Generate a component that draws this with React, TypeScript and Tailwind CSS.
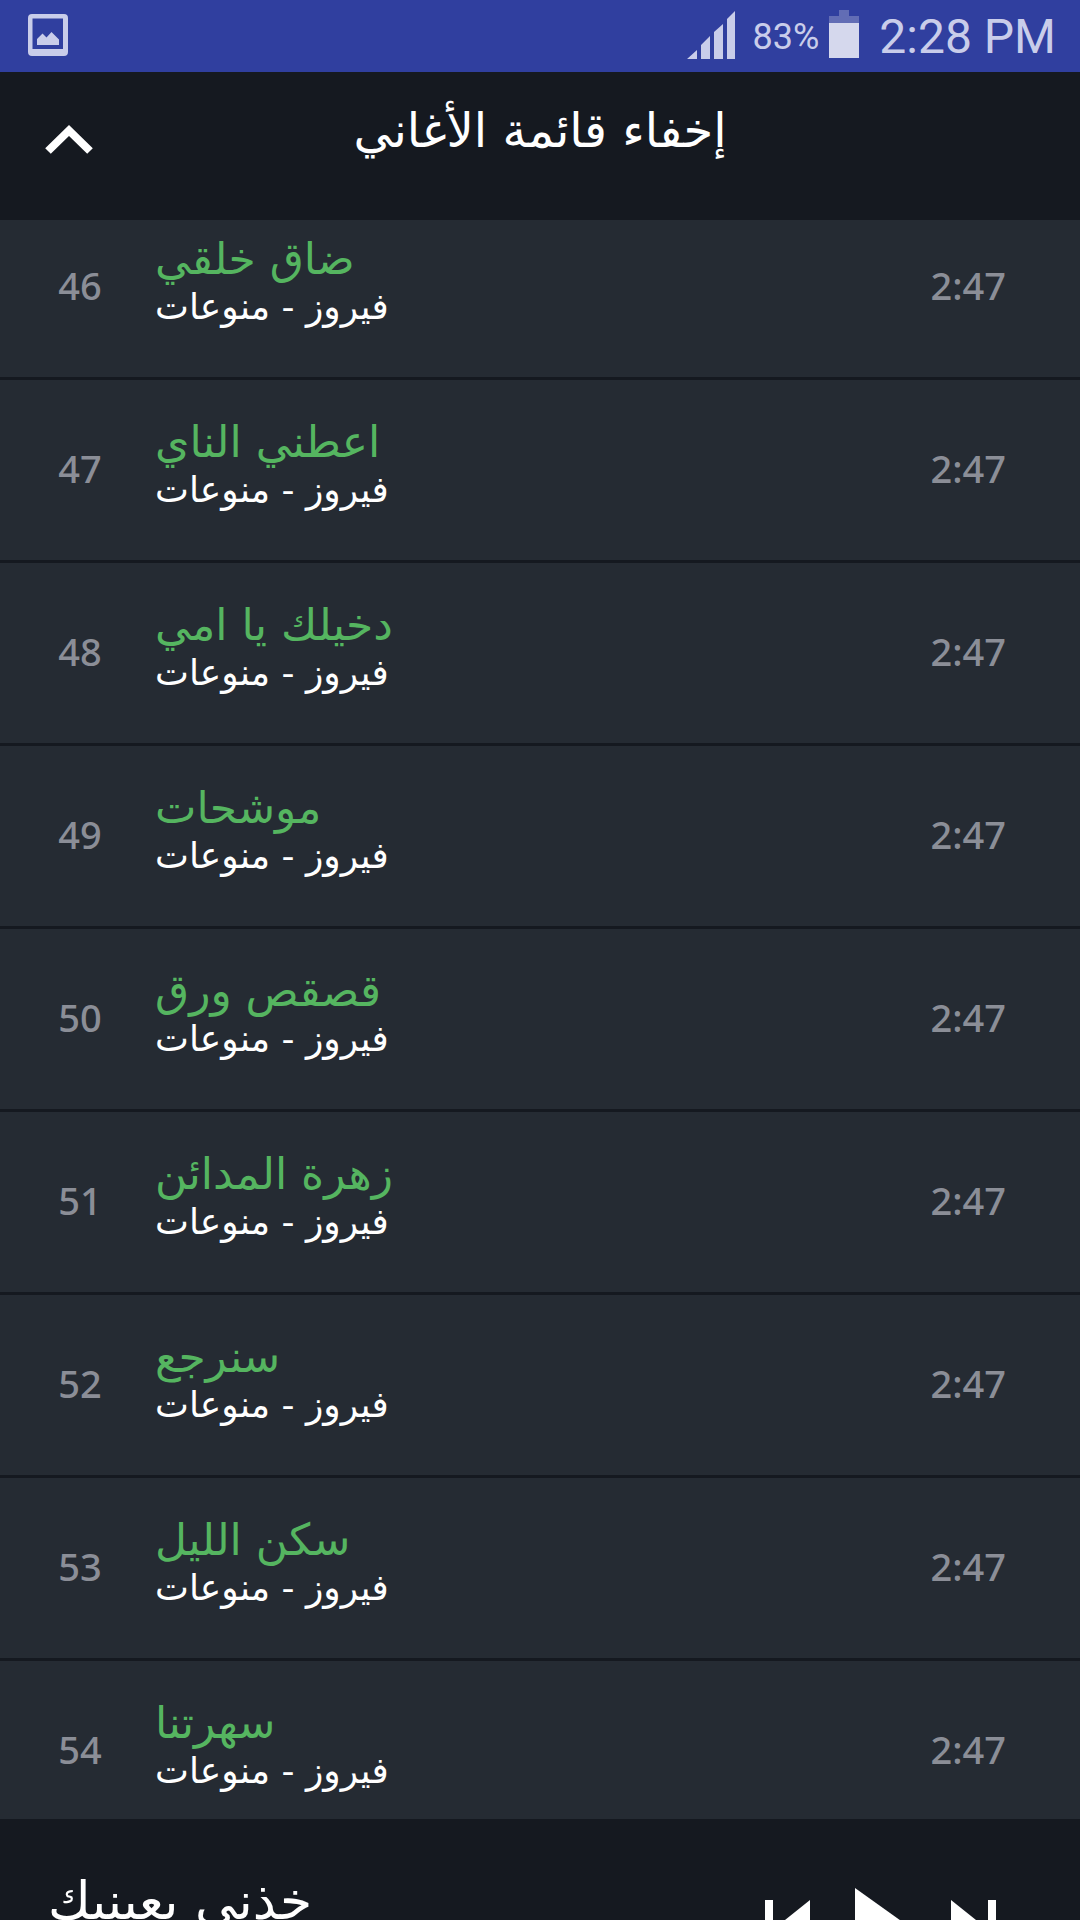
interface Song {
  id: number;
  title: string;
  artist: string;
  duration: string;
}

const artist = "فيروز - منوعات";

const songs: Song[] = [
  { id: 46, title: "ضاق خلقي", artist, duration: "2:47" },
  { id: 47, title: "اعطني الناي", artist, duration: "2:47" },
  { id: 48, title: "دخيلك يا امي", artist, duration: "2:47" },
  { id: 49, title: "موشحات", artist, duration: "2:47" },
  { id: 50, title: "قصقص ورق", artist, duration: "2:47" },
  { id: 51, title: "زهرة المدائن", artist, duration: "2:47" },
  { id: 52, title: "سنرجع", artist, duration: "2:47" },
  { id: 53, title: "سكن الليل", artist, duration: "2:47" },
  { id: 54, title: "سهرتنا", artist, duration: "2:47" },
];

const StatusBar = () => {
  return (
    <div className="flex h-[72px] shrink-0 items-center justify-between bg-[#303f9f] pl-7 pr-6 font-[Roboto,sans-serif] text-[#c9cdea]">
      <svg width="40" height="42" viewBox="0 0 40 42" fill="currentColor" className="mb-0.5">
        <path
          fillRule="evenodd"
          d="M4 0h32q4 0 4 4v34q0 4-4 4H4q-4 0-4-4V4q0-4 4-4zM4.500 4.500V35h30.500V4.500z"
        />
        <path d="M9 31v-6l5.500-5.500 4 4 5-5.500 7.500 7.500V31z" />
      </svg>
      <div className="flex items-center">
        <svg width="48" height="48" viewBox="0 0 48 48" fill="currentColor" className="mb-0.5">
          <path d="M0 48l10-9v9zM14 34l9-9v23h-9zM27 21l9-8v35h-9zM40 8l8-8v48h-8z" />
        </svg>
        <span className="ml-[18px] mt-0.5 text-[36px] leading-none">83%</span>
        <svg width="30" height="48" viewBox="0 0 30 48" className="mb-1 ml-2.5">
          <path d="M10 0h10v6h10v7H0V6h10z" fill="#626db5" />
          <path d="M0 13h30v35H0z" fill="#d5d8ed" />
        </svg>
        <span className="ml-5 mt-0.5 text-[48px] leading-none">2:28 PM</span>
      </div>
    </div>
  );
};

const Header = () => {
  return (
    <header className="grid h-[148px] shrink-0 grid-cols-[1fr_auto_1fr] items-start bg-[#151920] px-[45px]">
      <button type="button" aria-label="إخفاء" className="mt-[52px] w-12">
        <svg width="48" height="32" viewBox="0 0 48 32" fill="none">
          <path d="M3 27L24 6.500l21 20.500" stroke="#fff" strokeWidth="8" />
        </svg>
      </button>
      <h1
        dir="rtl"
        className="mt-[28px] font-['DejaVu_Sans',sans-serif] text-[48px] leading-[60px] text-white"
      >
        إخفاء قائمة الأغاني
      </h1>
    </header>
  );
};

const SongRow = ({ song }: { song: Song }) => {
  return (
    <li className="flex h-[183px] shrink-0 items-start border-b-[3px] border-[#151920] pl-4 pr-[74px]">
      <span className="mt-[62px] w-[128px] text-center text-[38px] font-medium leading-[52px] text-[#8b8e97]">
        {song.id}
      </span>
      <div className="mt-[36px] flex flex-1 flex-col items-start pl-[11px] font-['DejaVu_Sans',sans-serif]">
        <h2 dir="rtl" className="text-[44px] leading-[52px] text-[#55b560]">
          {song.title}
        </h2>
        <p dir="rtl" className="text-[36px] leading-[44px] text-white">
          {song.artist}
        </p>
      </div>
      <span className="mt-[62px] text-[38px] font-medium leading-[52px] text-[#8b8e97]">
        {song.duration}
      </span>
    </li>
  );
};

const Player = () => {
  return (
    <footer className="flex h-[101px] shrink-0 items-start justify-between overflow-hidden bg-[#151920] pl-12 pr-[84px] text-white">
      <span
        dir="rtl"
        className="mt-[52px] font-['DejaVu_Sans',sans-serif] text-[52px] leading-[60px]"
      >
        خذني بعينيك
      </span>
      <div className="mt-[69px] flex items-start">
        <button type="button" aria-label="السابق" className="mt-3">
          <svg width="45" height="56" viewBox="0 0 45 56" fill="currentColor">
            <path d="M0 0h8v56H0zM45 0v56L10 28z" />
          </svg>
        </button>
        <button type="button" aria-label="تشغيل" className="ml-[45px]">
          <svg width="56" height="80" viewBox="0 0 56 80" fill="currentColor">
            <path d="M0 0l56 40L0 80z" />
          </svg>
        </button>
        <button type="button" aria-label="التالي" className="ml-10 mt-3">
          <svg width="45" height="56" viewBox="0 0 45 56" fill="currentColor">
            <path d="M37 0h8v56h-8zM0 0l35 28L0 56z" />
          </svg>
        </button>
      </div>
    </footer>
  );
};

export default function App() {
  return (
    <div className="flex h-screen flex-col overflow-hidden bg-[#151920] font-['Noto_Sans',sans-serif]">
      <StatusBar />
      <Header />
      <main className="flex flex-1 flex-col overflow-hidden bg-[#252b33]">
        {/* list is scrolled a little, the first row sits partly under the header */}
        <ul className="-mt-[23px] flex flex-col">
          {songs.map((song) => (
            <SongRow key={song.id} song={song} />
          ))}
        </ul>
      </main>
      <Player />
    </div>
  );
}
